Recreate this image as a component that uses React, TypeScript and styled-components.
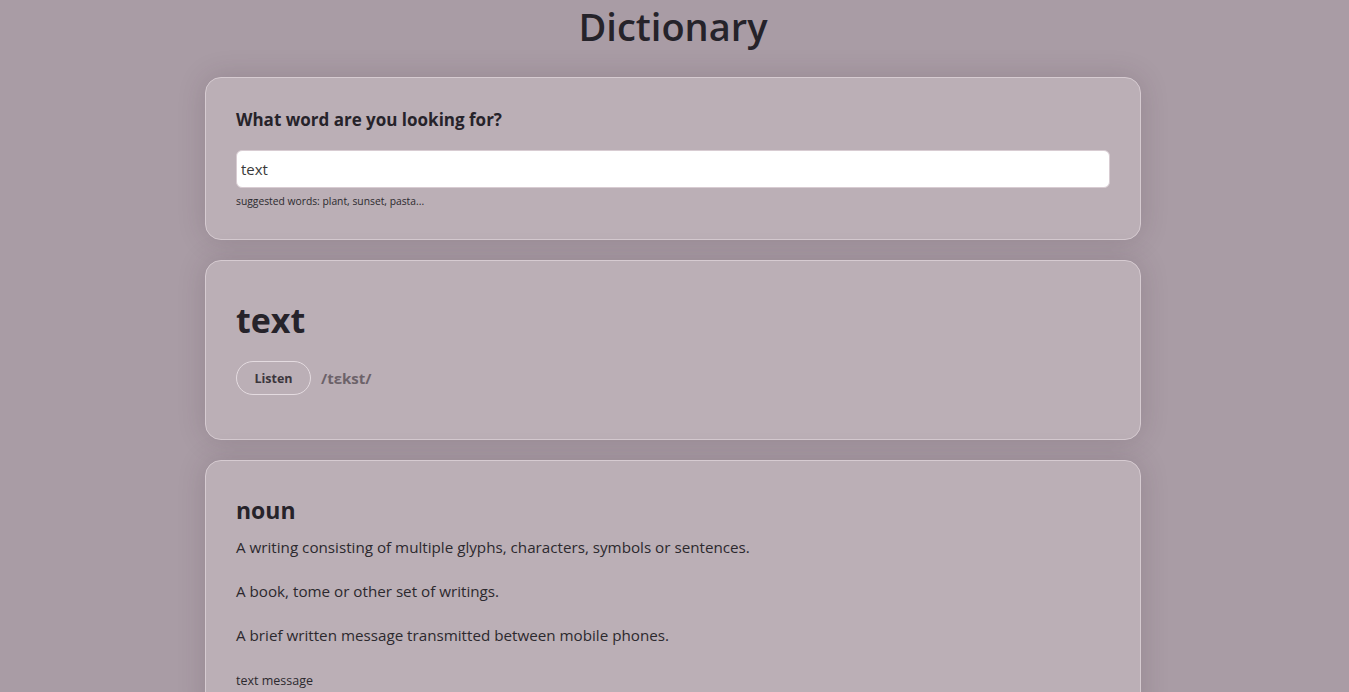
import React from "react";
import styled, { createGlobalStyle } from "styled-components";

const Global = createGlobalStyle`
  html, body { margin: 0; padding: 0; }
  body {
    background: #a99ca5;
    font-family: "Open Sans", "Noto Sans", sans-serif;
    color: #212529;
    height: 692px;
    overflow: hidden;
    padding-right: 3px;
  }
`;

const Page = styled.div`
  width: 936px;
  margin: 0 auto;
  display: flex;
  flex-direction: column;
  align-items: stretch;
`;

const Title = styled.h1`
  margin: 0 0 25px;
  text-align: center;
  font-size: 38px;
  font-weight: 600;
  line-height: 52px;
  color: #25232a;
`;

const Card = styled.section<{ $pb?: number }>`
  background: #bbafb6;
  border: 1px solid #d6cbd1;
  border-radius: 16px;
  box-shadow: 0 0 28px rgba(60, 40, 55, 0.18);
  padding: 30px 30px ${(p) => p.$pb ?? 30}px;
  margin-bottom: 20px;
`;

const Question = styled.h2`
  margin: 0 0 18px;
  font-size: 17px;
  font-weight: 700;
  line-height: 24px;
  color: #26232a;
`;

const Input = styled.input`
  display: block;
  box-sizing: border-box;
  width: 100%;
  height: 38px;
  border: 1px solid #d8ccd2;
  border-radius: 6px;
  background: #fff;
  padding: 0 4px;
  font-family: inherit;
  font-size: 15px;
  color: #3a3a3a;
  outline: none;
`;

const Hint = styled.div`
  margin-top: 6px;
  font-size: 10.3px;
  line-height: 14px;
  color: #2c2a2e;
`;

const Word = styled.h2`
  margin: 5px 0 17px;
  font-size: 34px;
  font-weight: 700;
  line-height: 48px;
  color: #26232a;
`;

const Row = styled.div`
  display: flex;
  align-items: center;
  gap: 10px;
`;

const Listen = styled.button`
  width: 75px;
  height: 34px;
  border: 1px solid #e4dbe0;
  border-radius: 17px;
  background: transparent;
  font-family: inherit;
  font-size: 12.5px;
  font-weight: 700;
  color: #3b363c;
`;

const Phonetic = styled.span`
  font-size: 15px;
  font-weight: 700;
  color: #6c6269;
`;

const Pos = styled.h3`
  margin: 4px 0 10px;
  font-size: 23px;
  font-weight: 700;
  line-height: 30px;
  color: #26232a;
`;

const Def = styled.p`
  margin: 0 0 20px;
  font-size: 15.2px;
  line-height: 24px;
  color: #2c292e;
`;

const Example = styled.div`
  margin-top: 25px;
  font-size: 12.5px;
  color: #2c292e;
`;

export default function App() {
  return (
    <>
      <Global />
      <Page>
        <Title>Dictionary</Title>
        <Card $pb={31}>
          <Question>What word are you looking for?</Question>
          <Input defaultValue="text" />
          <Hint>suggested words: plant, sunset, pasta...</Hint>
        </Card>
        <Card $pb={44}>
          <Word>text</Word>
          <Row>
            <Listen>Listen</Listen>
            <Phonetic>/tɛkst/</Phonetic>
          </Row>
        </Card>
        <Card>
          <Pos>noun</Pos>
          <Def>A writing consisting of multiple glyphs, characters, symbols or sentences.</Def>
          <Def>A book, tome or other set of writings.</Def>
          <Def>A brief written message transmitted between mobile phones.</Def>
          <Example>text message</Example>
        </Card>
      </Page>
    </>
  );
}
